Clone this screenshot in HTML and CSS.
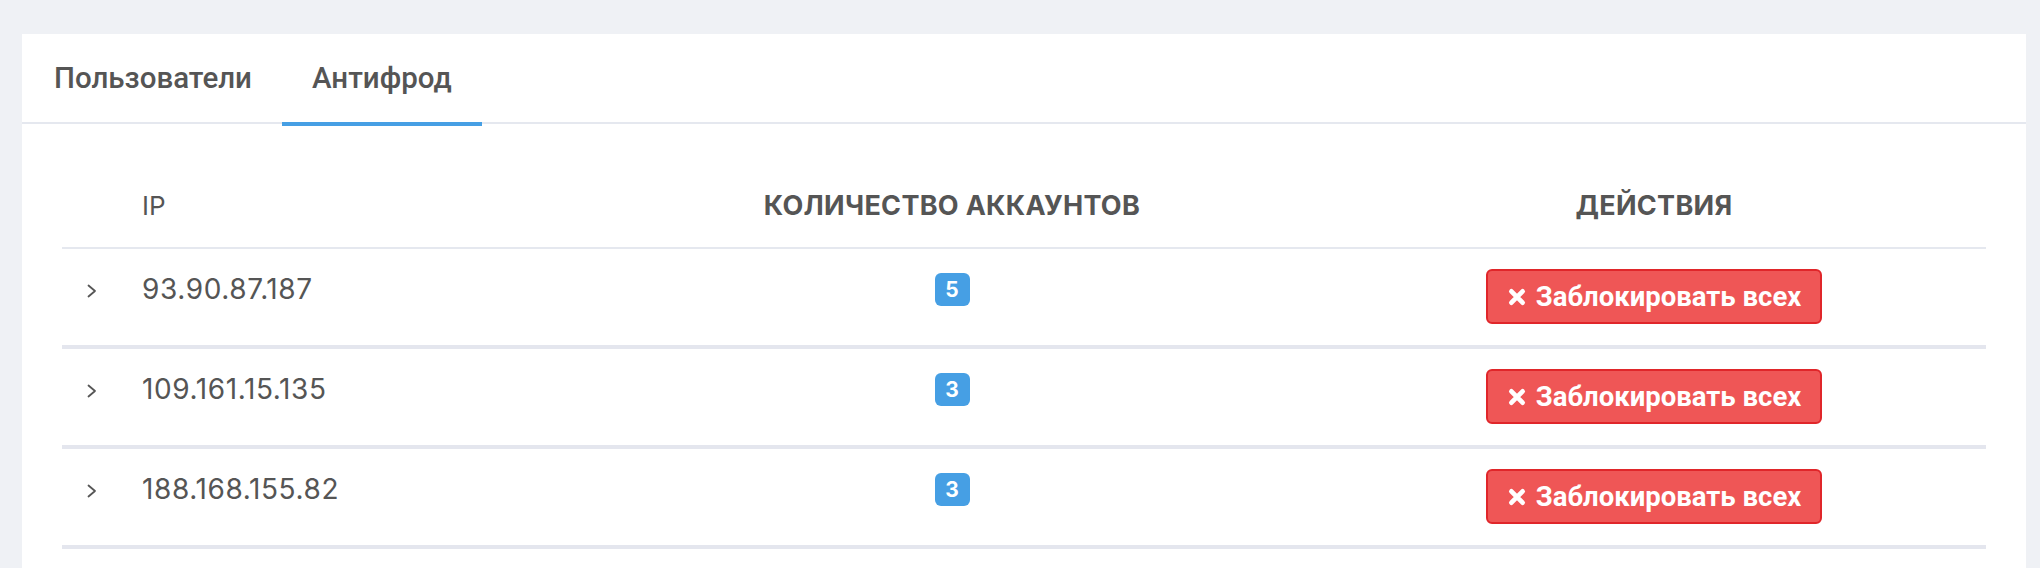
FILE: index.html
```html
<!DOCTYPE html>
<html lang="ru">
<head>
<meta charset="utf-8">
<title>Антифрод</title>
<link rel="stylesheet" href="styles.css">
</head>
<body>
<div class="page">
  <div class="card">
    <nav class="tabs">
      <a class="tab">Пользователи</a>
      <a class="tab active">Антифрод</a>
    </nav>
    <div class="card-body">
      <table class="grid">
        <colgroup>
          <col class="c-toggle">
          <col class="c-ip">
          <col class="c-count">
          <col class="c-actions">
        </colgroup>
        <thead>
          <tr>
            <th></th>
            <th class="th-ip">IP</th>
            <th class="th-center">Количество аккаунтов</th>
            <th class="th-center">Действия</th>
          </tr>
        </thead>
        <tbody>
          <tr>
            <td class="td-toggle"><svg class="chev" viewBox="0 0 10 14" width="10" height="14"><path d="M1.5 1.5 L8 7 L1.5 12.5" fill="none" stroke="#555" stroke-width="1.8" stroke-linecap="round" stroke-linejoin="round"/></svg></td>
            <td class="td-ip">93.90.87.187</td>
            <td class="td-center"><span class="badge">5</span></td>
            <td class="td-center"><button class="btn-block"><svg class="x" viewBox="0 0 16 16" width="18" height="18"><path d="M3 3 L13 13 M13 3 L3 13" stroke="#fff" stroke-width="4.2" stroke-linecap="round"/></svg>Заблокировать всех</button></td>
          </tr>
          <tr>
            <td class="td-toggle"><svg class="chev" viewBox="0 0 10 14" width="10" height="14"><path d="M1.5 1.5 L8 7 L1.5 12.5" fill="none" stroke="#555" stroke-width="1.8" stroke-linecap="round" stroke-linejoin="round"/></svg></td>
            <td class="td-ip">109.161.15.135</td>
            <td class="td-center"><span class="badge">3</span></td>
            <td class="td-center"><button class="btn-block"><svg class="x" viewBox="0 0 16 16" width="18" height="18"><path d="M3 3 L13 13 M13 3 L3 13" stroke="#fff" stroke-width="4.2" stroke-linecap="round"/></svg>Заблокировать всех</button></td>
          </tr>
          <tr>
            <td class="td-toggle"><svg class="chev" viewBox="0 0 10 14" width="10" height="14"><path d="M1.5 1.5 L8 7 L1.5 12.5" fill="none" stroke="#555" stroke-width="1.8" stroke-linecap="round" stroke-linejoin="round"/></svg></td>
            <td class="td-ip">188.168.155.82</td>
            <td class="td-center"><span class="badge">3</span></td>
            <td class="td-center"><button class="btn-block"><svg class="x" viewBox="0 0 16 16" width="18" height="18"><path d="M3 3 L13 13 M13 3 L3 13" stroke="#fff" stroke-width="4.2" stroke-linecap="round"/></svg>Заблокировать всех</button></td>
          </tr>
        </tbody>
      </table>
    </div>
  </div>
</div>
</body>
</html>
```
FILE: styles.css
```css
html, body {
  margin: 0;
  padding: 0;
  background: #eff1f5;
}

body {
  font-family: Inter, "Noto Sans", sans-serif;
  color: #555;
}

.page {
  padding: 34px 14px 0 22px;
}

.card {
  background: #fff;
  min-height: 600px;
}

.tabs {
  display: flex;
  height: 88px;
  border-bottom: 2px solid #e5e8ef;
  padding-left: 2px;
}

.tab {
  position: relative;
  display: flex;
  align-items: center;
  padding: 0 30px;
  font-family: Roboto, "Liberation Sans", sans-serif;
  font-weight: 500;
  font-size: 29.5px;
  color: #555;
  cursor: pointer;
}

.tab.active::after {
  content: "";
  position: absolute;
  left: 0;
  right: 0;
  bottom: -4px;
  height: 4px;
  background: #469fe4;
}

.card-body {
  padding: 40px 40px 0 40px;
}

.grid {
  width: 100%;
  border-collapse: separate;
  border-spacing: 0;
  table-layout: fixed;
}

.c-toggle { width: 80px; }
.c-ip { width: 440px; }
.c-count { width: 740px; }
.c-actions { width: 664px; }

.grid th {
  height: 83px;
  padding: 0;
  vertical-align: middle;
  border-bottom: 2px solid #e5e8ef;
  font-size: 27px;
  letter-spacing: 0.3px;
  font-weight: 700;
  text-transform: uppercase;
  color: #555;
}

.grid th.th-ip {
  text-align: left;
  font-weight: 400;
  font-size: 26px;
  letter-spacing: 0;
  text-transform: none;
}

.grid th.th-center {
  text-align: center;
}

.grid td {
  padding: 20px 0 21px;
  vertical-align: top;
  border-bottom: 4px solid #e4e6ee;
}

.td-toggle {
  padding-left: 25px !important;
}

.chev {
  display: block;
  margin-top: 15px;
}

.td-ip {
  font-size: 28px;
  letter-spacing: 0.6px;
  line-height: 40px;
  color: #555;
}

.td-center {
  text-align: center;
}

.badge {
  display: inline-flex;
  align-items: center;
  justify-content: center;
  width: 35px;
  height: 33px;
  margin-top: 4px;
  border-radius: 6px;
  background: #469fe4;
  color: #fff;
  font-weight: 700;
  font-size: 21px;
}

.btn-block {
  display: inline-flex;
  align-items: center;
  gap: 10px;
  height: 55px;
  padding: 0 19px 0 20px;
  border: 2px solid #e0262a;
  border-radius: 6px;
  background: #ef5656;
  color: #fff;
  font-family: Roboto, "Liberation Sans", sans-serif;
  font-weight: 700;
  font-size: 27.5px;
  cursor: pointer;
}

.x {
  display: block;
}
```
